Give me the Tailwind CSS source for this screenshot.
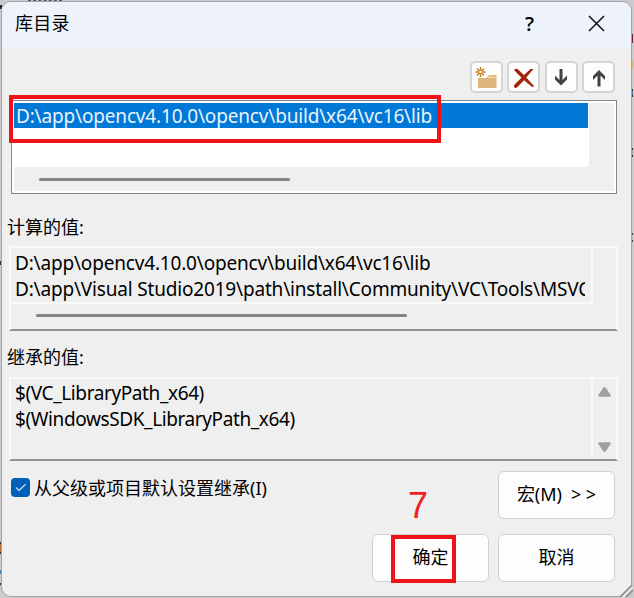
<!DOCTYPE html>
<html lang="zh-CN">
<head>
<meta charset="utf-8">
<title>库目录</title>
<script src="https://cdn.jsdelivr.net/npm/@tailwindcss/browser@4"></script>
</head>
<body class="w-[634px] h-[598px] overflow-hidden bg-[#cbcbcd] pl-px pt-px pr-px font-['Noto_Sans','Noto_Sans_CJK_SC',sans-serif] text-black">
<!-- slivers of the window behind the dialog -->
<div class="absolute left-[28px] top-0 w-[34px] h-px border-t border-dashed border-[#555]"></div>
<div class="absolute left-0 top-[5px] w-[2px] h-[4px] bg-[#222]"></div>
<div class="absolute left-0 top-[261px] w-px h-[4px] bg-[#333]"></div>
<div class="absolute left-0 top-[542px] w-px h-[12px] border-y-2 border-[#333] bg-[#c07030]"></div>
<div class="absolute left-0 top-[570px] w-px h-[15px] border-t-4 border-b-2 border-t-[#3a80c0] border-b-[#333]"></div>
<div class="absolute left-[632px] top-[34px] w-px h-[9px] bg-[#7a1848]"></div>
<div class="absolute left-[632px] top-[61px] w-px h-[8px] bg-[#e0b860]"></div>
<div class="absolute left-[632px] top-[89px] w-px h-[8px] border-y-2 border-[#333] bg-[#3a80c0]"></div>
<div class="absolute left-[632px] top-[148px] w-px h-[9px] border-y-2 border-[#333] bg-[#8ab]"></div>
<div class="absolute left-[632px] top-[233px] w-px h-[9px] border-y-2 border-[#444] bg-[#cbb]"></div>

<main class="relative w-[631px] h-[596px] rounded-[10px] border border-[#a3a4a7] bg-[#efefef] overflow-hidden flex flex-col">
  <header class="h-[46px] shrink-0 bg-[#eef3fb] flex items-center pl-[13px] pr-[26px]">
    <h1 class="text-[18px] leading-[24px] tracking-[0.2px] -mt-[4px] flex-1">库目录</h1>
    <span class="font-['Open_Sans',sans-serif] text-[20px] leading-[24px] font-semibold mr-[54px] -mt-[3px]">?</span>
    <svg class="w-[17px] h-[17px] -mt-[3px]" viewBox="0 0 17 17" fill="none" stroke="#111" stroke-width="1.5"><path d="M1 1 16 16M16 1 1 16"/></svg>
  </header>

  <div class="mt-[13px] h-[33px] shrink-0 flex justify-end gap-[4.5px] pr-[16px]">
    <button class="w-[33px] h-[32px] rounded-[5px] border-2 border-[#d4d4d4] bg-[#fdfdfd] flex items-center justify-center"><svg class="w-[24px] h-[24px]" viewBox="0 0 24 24"><path d="M4 13h8.500l2.500-3H22.500V23H4z" fill="#dcb67a"/><path d="M14 12.200h7.500" stroke="#f5e3c3" stroke-width="1"/><path d="M6.500 2v10M1.500 7h10M3 3.500l7 7M10 3.500l-7 7" stroke="#c27d1a" stroke-width="1.400"/><circle cx="6.500" cy="7" r="1.300" fill="#fdfdfd"/></svg></button>
    <button class="w-[33px] h-[32px] rounded-[5px] border-2 border-[#d4d4d4] bg-[#fdfdfd] flex items-center justify-center"><svg class="w-[24px] h-[24px]" viewBox="0 0 24 24" fill="#a1260d"><path d="M2 5Q3.500 3 5.500 4L12 10 18.500 4H21.500L14.200 12.500 22 21 20.500 22.300 12 15.200 5.500 22Q3.500 24 2 22 1.500 20.500 3 19L9.500 12.800z"/></svg></button>
    <button class="w-[33px] h-[32px] rounded-[5px] border-2 border-[#d4d4d4] bg-[#fdfdfd] flex items-center justify-center"><svg class="w-[24px] h-[24px]" viewBox="0 0 24 24"><path d="M10.500 4h3v11l4.500-4.500v4L12 20.500 6 14.500v-4l4.500 4.500z" fill="#424242"/></svg></button>
    <button class="w-[33px] h-[32px] rounded-[5px] border-2 border-[#d4d4d4] bg-[#fdfdfd] flex items-center justify-center"><svg class="w-[24px] h-[24px]" viewBox="0 0 24 24"><path d="M10.500 21.500h3v-11l4.500 4.500v-4L12 5 6 11v4l4.500-4.500z" fill="#424242"/></svg></button>
  </div>

  <section class="mt-[6px] ml-[9px] w-[606px] h-[94px] shrink-0 border border-[#828790] bg-white p-[2px]">
    <div class="h-full bg-[#efefef]">
      <div class="w-[575px] h-[64px] bg-white rounded-br-[3px]">
        <div class="w-[574px] h-[25px] bg-[#0078d7] text-[#eaf3fb] pl-[2px] flex items-center text-[19px] leading-[24px] tracking-[-0.17px] whitespace-pre">D:\app\opencv4.10.0\opencv\build\x64\vc16\lib</div>
      </div>
      <div class="mt-[11px] ml-[25px] w-[251px] h-[3px] rounded-full bg-[#858585]"></div>
    </div>
  </section>

  <h2 class="mt-[21px] ml-[5px] text-[18px] leading-[24px] h-[24px] shrink-0">计算的值:</h2>
  <section class="mt-[7px] ml-[7px] w-[609px] h-[85px] shrink-0 border-2 border-t-[#f9f9f9] border-l-[#f9f9f9] border-r-[#f9f9f9] border-b-[#929292]">
    <div class="w-[582px] h-[56px] border-r-2 border-b-2 border-[#fafafa] rounded-br-[3px] pl-[4px] pr-[6px] pt-[3px] text-[19px] leading-[25.5px] tracking-[-0.18px] whitespace-pre"><div class="overflow-hidden">D:\app\opencv4.10.0\opencv\build\x64\vc16\lib</div><div class="overflow-hidden">D:\app\Visual Studio2019\path\install\Community\VC\Tools\MSVC</div></div>
    <div class="mt-[10px] ml-[25px] w-[371px] h-[3px] rounded-full bg-[#858585]"></div>
  </section>

  <h2 class="mt-[14px] ml-[5px] text-[18px] leading-[24px] h-[24px] shrink-0">继承的值:</h2>
  <section class="mt-[8px] ml-[7px] w-[609px] h-[84px] shrink-0 border-2 border-t-[#f9f9f9] border-l-[#f9f9f9] border-r-[#f9f9f9] border-b-[#929292] flex">
    <div class="w-[582px] border-r-2 border-[#fafafa] pl-[4px] pt-[2px] text-[19px] leading-[25.5px] tracking-[-0.39px] whitespace-pre"><div>$(VC_LibraryPath_x64)</div><div>$(WindowsSDK_LibraryPath_x64)</div></div>
    <div class="flex-1 flex flex-col items-center justify-between pt-[8px] pb-[7px]">
      <svg class="w-[13px] h-[10px]" viewBox="0 0 13 10" fill="#a0a0a0"><path d="M5.200.8Q6.500-.6 7.800.8L12.600 8Q13.200 9.700 11.500 9.700h-10Q-.2 9.700.4 8z"/></svg>
      <svg class="w-[13px] h-[10px]" viewBox="0 0 13 10" fill="#a0a0a0"><path d="M5.200 9.200Q6.500 10.600 7.800 9.200L12.600 2Q13.200.3 11.500.3h-10Q-.2.3.4 2z"/></svg>
    </div>
  </section>

  <div class="mt-[10px] h-[48px] shrink-0 flex justify-between pr-[16px] pl-[9px]">
    <label class="flex gap-[4px] pt-[7px] h-[26px] items-center text-[18px] leading-[24px] whitespace-pre"><span class="w-[19px] h-[19px] rounded-[4px] bg-[#005fb8] flex items-center justify-center"><svg class="w-[13px] h-[13px]" viewBox="0 0 13 13" fill="none" stroke="#b9d6f0" stroke-width="1.400"><path d="M2 6.500 5 9.500 11.500 3.200"/></svg></span><span>从父级或项目默认设置继承(I)</span></label>
    <button class="w-[117px] h-[48px] rounded-[6px] border-[1.5px] border-[#d0d0d0] bg-[#fdfdfd] text-[18px] whitespace-pre flex items-center justify-center gap-[9px] pb-[2px]"><span>宏(M)</span><span class="tracking-[4.5px] -mr-[4.500px]">&gt;&gt;</span></button>
  </div>
  <div class="mt-[15px] h-[48px] shrink-0 flex justify-end gap-[9px] pr-[16px] text-[18px]">
    <button class="w-[117px] h-[48px] rounded-[6px] border-[1.5px] border-[#d0d0d0] bg-[#fdfdfd] pb-[2px]">确定</button>
    <button class="w-[117px] h-[48px] rounded-[6px] border-[1.5px] border-[#d0d0d0] bg-[#fdfdfd] pb-[2px]">取消</button>
  </div>
</main>

<!-- annotations over the dialog -->
<div class="absolute left-[9px] top-[95px] w-[432px] h-[48px] border-4 border-[#f01219]"></div>
<div class="absolute left-[391px] top-[535px] w-[65px] h-[48px] border-4 border-[#f01219]"></div>
<div class="absolute left-[408px] top-[488px] text-[36px] leading-[36px] text-[#f01f26] font-['Liberation_Sans',sans-serif]">7</div>
<svg class="absolute left-[618px] top-[582px] w-[15px] h-[15px]" viewBox="0 0 15 15" fill="none"><path d="M15 2 2 15h13z" fill="#c4c4c4"/><path d="M14 3 2 15M15 8 8 15" stroke="#8a8a8a" stroke-width="1.500"/><path d="M15 5 5 15" stroke="#f4f4f4" stroke-width="1.500"/></svg>
</body>
</html>
